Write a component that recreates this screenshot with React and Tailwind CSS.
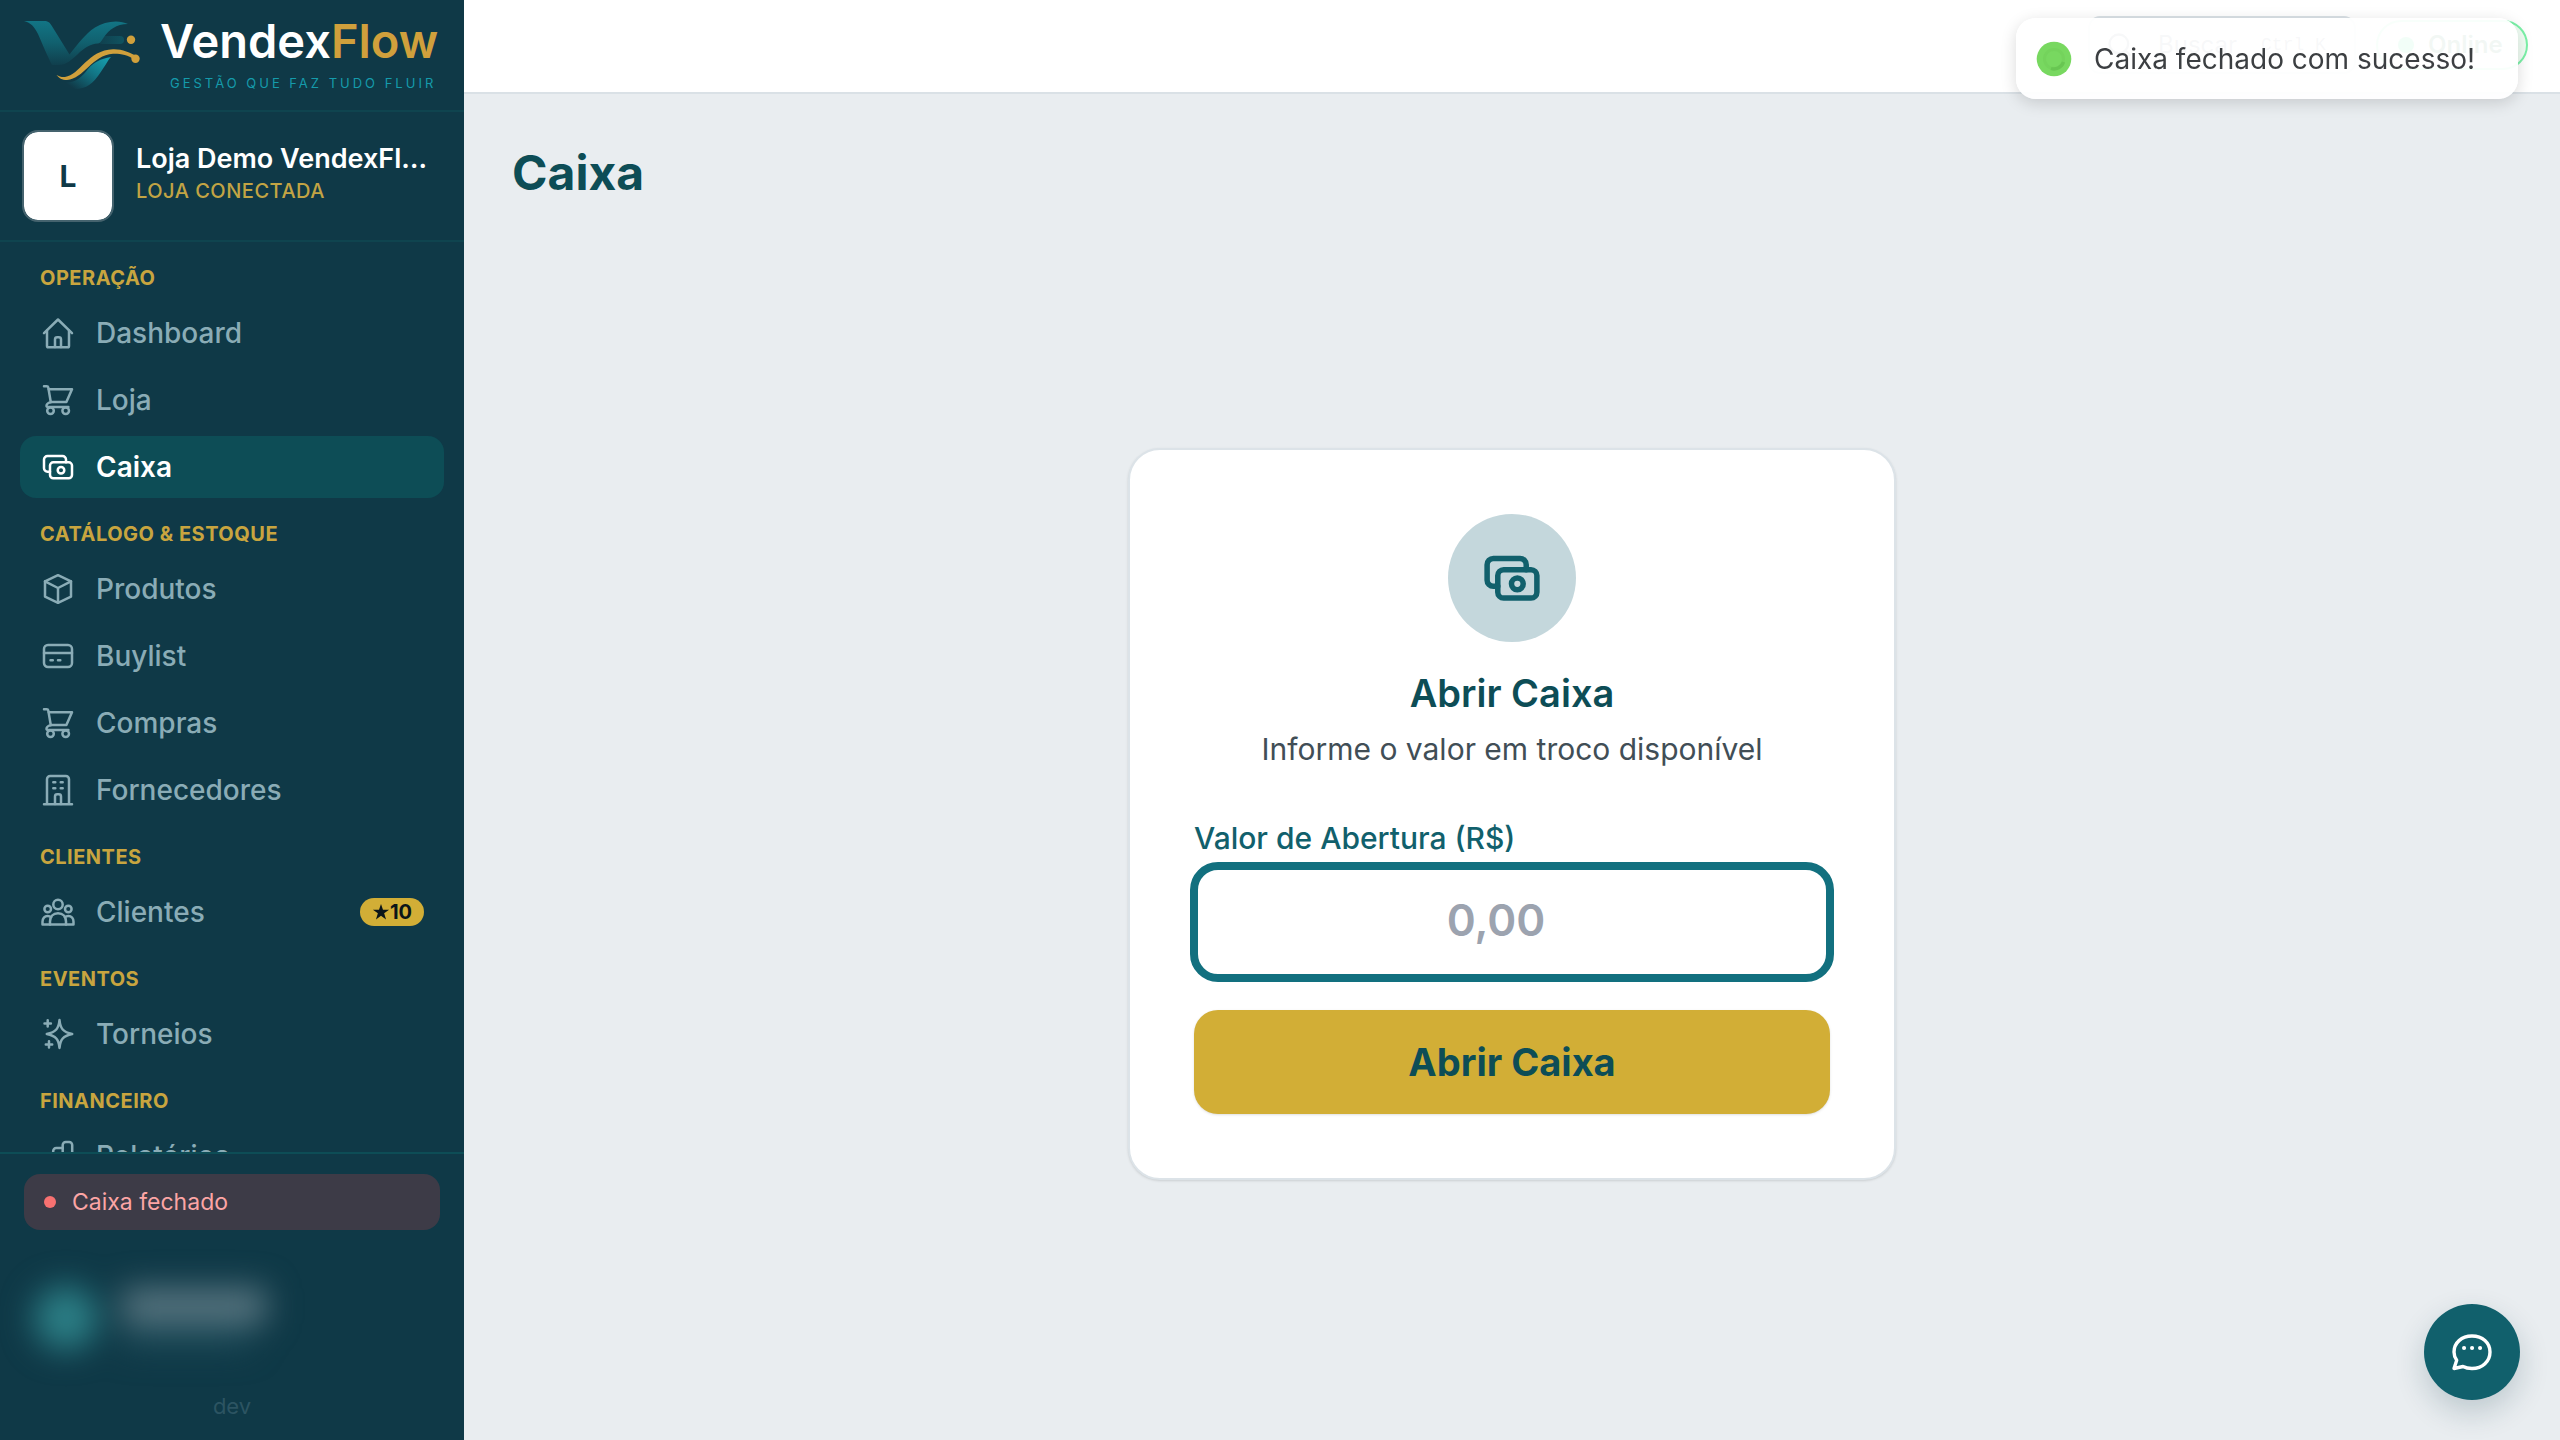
const icons = {
  home: (
    <>
      <path d="M4 18.2 18 4.5l14 13.7" />
      <path d="M7 15.5V31a1.3 1.3 0 0 0 1.3 1.3h19.4A1.3 1.3 0 0 0 29 31V15.5" />
      <path d="M15 32v-7.5a2.2 2.2 0 0 1 2.2-2.2h1.6a2.2 2.2 0 0 1 2.2 2.2V32" />
    </>
  ),
  cart: (
    <>
      <path d="M4 4.2h2.6c1 0 1.5.4 1.7 1.4l2.5 14.7" />
      <path d="M8.8 7.2H32l-5.6 12.9H10.8c-2 .5-4.3 2-4.3 3.7 0 .8.6 1.2 1.4 1.2h20.5" />
      <circle cx="10.5" cy="28.7" r="3.3" />
      <circle cx="25.7" cy="28.7" r="3.3" />
    </>
  ),
  cash: (
    <>
      <rect x="10" y="13.3" width="22" height="16" rx="3.3" />
      <circle cx="21" cy="21.3" r="3.3" />
      <path d="M10 22.7H7.5A3.5 3.5 0 0 1 4 19.2v-8.7A3.5 3.5 0 0 1 7.5 7h15a3.5 3.5 0 0 1 3.5 3.5v2.8" />
    </>
  ),
  box: (
    <>
      <path d="M18 4.2 31 10.4v15.2L18 31.8 5 25.6V10.4z" />
      <path d="M5 10.4 18 17l13-6.6M18 17v14.8" />
    </>
  ),
  card: (
    <>
      <rect x="4" y="7" width="28" height="22" rx="4" />
      <path d="M4 15h28M10.5 22.3h2.3M18 22.3h2.3" />
    </>
  ),
  building: (
    <>
      <path d="M4 32.3h28M7 32V7.2A3.2 3.2 0 0 1 10.2 4h15.6A3.2 3.2 0 0 1 29 7.2V32" />
      <path d="M15 32v-7.5a2.2 2.2 0 0 1 2.2-2.2h1.6a2.2 2.2 0 0 1 2.2 2.2V32" />
      <path d="M13.3 10.3h2M20.7 10.3h2M13.3 16.3h2M20.7 16.3h2" />
    </>
  ),
  people: (
    <>
      <circle cx="18" cy="10.5" r="4.7" />
      <circle cx="7.7" cy="15" r="3.3" />
      <circle cx="28.3" cy="15" r="3.3" />
      <path d="M10 30.5v-3c0-4.7 3-8.3 8-8.3s8 3.6 8 8.3v3" />
      <path d="M11.2 23.2c-1-.9-2-1.2-3.5-1.2-3.2 0-5.2 2.4-5.2 5.8v2.7h31v-2.7c0-3.4-2-5.8-5.2-5.8-1.5 0-2.5.3-3.5 1.2" />
    </>
  ),
  sparkles: (
    <>
      <path d="M19.5 4c.8 8.5 3.5 12.2 12.7 14-9.2 1.8-11.9 5.5-12.7 14-.8-8.5-3.5-12.2-12.7-14 9.2-1.8 11.9-5.5 12.7-14z" />
      <path d="M7.7 4.2v6.4M4.5 7.4h6.4M9 25.2v6.4M5.8 28.4h6.4" />
    </>
  ),
  chart: (
    <>
      <rect x="22.7" y="4" width="9.5" height="28" rx="3" />
      <path d="M22.7 32h-9.5V13a3 3 0 0 1 3-3h6.5M13.2 17H6.7a3 3 0 0 0-3 3v9a3 3 0 0 0 3 3h6.5" />
    </>
  ),
};

const groups = [
  {
    title: "Operação",
    items: [
      { label: "Dashboard", icon: "home" },
      { label: "Loja", icon: "cart" },
      { label: "Caixa", icon: "cash", active: true },
    ],
  },
  {
    title: "Catálogo & Estoque",
    items: [
      { label: "Produtos", icon: "box" },
      { label: "Buylist", icon: "card" },
      { label: "Compras", icon: "cart" },
      { label: "Fornecedores", icon: "building" },
    ],
  },
  {
    title: "Clientes",
    items: [{ label: "Clientes", icon: "people", badge: "10" }],
  },
  { title: "Eventos", items: [{ label: "Torneios", icon: "sparkles" }] },
  { title: "Financeiro", items: [{ label: "Relatórios", icon: "chart" }] },
];

function Icon({ name, className, strokeWidth = 2.5 }) {
  return (
    <svg
      viewBox="0 0 36 36"
      fill="none"
      stroke="currentColor"
      strokeWidth={strokeWidth}
      strokeLinecap="round"
      strokeLinejoin="round"
      aria-hidden="true"
      className={className}
    >
      {icons[name]}
    </svg>
  );
}

function Logo() {
  return (
    <svg viewBox="24 20 116 70" className="w-[116px] h-[70px] shrink-0" aria-hidden="true">
      <defs>
        <linearGradient id="wing" x1="0" y1="0" x2="0" y2="1">
          <stop offset="0" stopColor="#127585" />
          <stop offset="0.5" stopColor="#11606e" />
          <stop offset="1" stopColor="#103f4d" />
        </linearGradient>
        <linearGradient id="wave" x1="1" y1="0" x2="0.1" y2="0.8">
          <stop offset="0" stopColor="#17a3b3" />
          <stop offset="0.5" stopColor="#127585" />
          <stop offset="1" stopColor="#103947" />
        </linearGradient>
        <linearGradient id="trail" x1="0" y1="0" x2="1" y2="0">
          <stop offset="0" stopColor="#103f4d" />
          <stop offset="1" stopColor="#0f5360" />
        </linearGradient>
      </defs>
      <rect x="98" y="36" width="26" height="8" rx="4" fill="url(#trail)" />
      <path
        d="M24 21H44C48 21 50 22.5 52.5 27L69.5 54.5C78 44 85 34 95 27.5C105 21 119 19.5 128 24C116 24 109 30 104 37C101 41 101 43 98 43.5C90 44 84 48 78 54C71 60 67 65 58 65H52C47 55 42 43 38 34C34 26 31 23 24 21Z"
        fill="url(#wing)"
      />
      <path
        d="M111 57C108 60 104 68 98 76C90 87 82 89 75 89C69 89 63 86 60 82C74 85 82 77 88 69C94 62 100 59 111 57Z"
        fill="url(#wave)"
      />
      <path
        d="M56.5 75C59 76.5 62 77.3 65 77C80 75 88 50 113 49.3C122 49 130 52.5 137 56.5L134 59.5C128 55 120 53.5 113 53.8C92 55 84 79 67 80C62 80 59 78 56.5 75Z"
        fill="#d0a03c"
      />
      <circle cx="131" cy="39.7" r="4.2" fill="#d0a03c" />
      <circle cx="135.5" cy="58.8" r="4.2" fill="#d0a03c" />
    </svg>
  );
}

function NavItem({ item }) {
  return (
    <a
      href="#"
      aria-current={item.active ? "page" : undefined}
      className={
        item.active
          ? "flex items-center gap-5 h-[62px] px-5 rounded-2xl bg-[#0d4d56] text-white font-semibold"
          : "flex items-center gap-5 h-[62px] px-5 rounded-2xl text-[#8aacb6] font-medium hover:text-white"
      }
    >
      <Icon name={item.icon} className="size-9 shrink-0" />
      <span className="flex-1">{item.label}</span>
      {item.badge && (
        <span className="flex items-center justify-center w-16 h-7 rounded-full bg-[#d2ae36] text-[#0b1519] text-xl leading-7 font-bold">
          <svg viewBox="0 0 20 20" className="size-[18px] shrink-0" fill="currentColor" aria-hidden="true">
            <path d="m10 1 2.2 6.5H19l-5.5 4 2.1 6.7-5.6-4-5.6 4 2.1-6.7L1 7.5h6.8z" />
          </svg>
          {item.badge}
        </span>
      )}
    </a>
  );
}

function Sidebar() {
  return (
    <aside className="sticky top-0 h-screen w-[464px] shrink-0 flex flex-col bg-[#0f3947]">
      {/* Brand */}
      <div className="flex items-center gap-5 h-28 pl-6 border-b-2 border-[#0f444f]">
        <Logo />
        <div className="flex flex-col">
          <div className="text-[47px] leading-[44px] font-semibold text-white">
            Vendex<span className="text-[#d0a03c]">Flow</span>
          </div>
          <div className="pl-2.5 pt-3 text-[13px] leading-4 uppercase tracking-[3px] text-[#159bab]">
            Gestão que faz tudo fluir
          </div>
        </div>
      </div>

      {/* Store */}
      <div className="flex items-center gap-[22px] pl-[22px] pr-8 h-[130px] border-b-2 border-[#0f444f]">
        <div className="flex items-center justify-center size-[92px] shrink-0 rounded-2xl border-2 border-[#45636e] bg-white bg-clip-padding text-[30px] font-bold text-[#0f3947]">
          L
        </div>
        <div className="min-w-0 flex-1 pb-1.5">
          <div className="text-[27px] leading-9 font-semibold text-white truncate">
            Loja Demo VendexFlow
          </div>
          <div className="text-xl leading-7 uppercase tracking-wide font-medium text-[#c2a444]">
            Loja conectada
          </div>
        </div>
      </div>

      {/* Navigation */}
      <nav className="flex-1 min-h-0 overflow-hidden px-5 text-[28px]">
        {groups.map((group) => (
          <div key={group.title} className="pt-[21px]">
            <h2 className="mb-[9px] px-5 text-xl leading-[30px] font-bold uppercase tracking-wide text-[#c8a53f]">
              {group.title}
            </h2>
            <div className="flex flex-col gap-[5px]">
              {group.items.map((item) => (
                <NavItem key={item.label} item={item} />
              ))}
            </div>
          </div>
        ))}
      </nav>

      {/* Footer */}
      <div className="h-72 px-6 pt-5 border-t-2 border-[#0d4d56]">
        <div className="flex items-center gap-4 h-14 px-5 rounded-2xl bg-[#3d3b47] text-[23px] text-[#fca5a5]">
          <span className="size-3 rounded-full bg-[#f87171]" />
          Caixa fechado
        </div>
        <div className="flex items-center gap-6 h-[156px] pt-5 pl-2.5 blur-[16px]" aria-hidden="true">
          <div className="size-16 rounded-full bg-[#2c7f86]" />
          <div>
            <div className="w-36 h-9 rounded-sm bg-[#587580]" />
            <div className="mt-1 w-32 h-5 rounded-sm bg-[#1c4a58]" />
          </div>
        </div>
        <p className="pt-1 text-center text-[22px] leading-8 text-[#2c5462]">dev</p>
      </div>
    </aside>
  );
}

function Toast() {
  return (
    <div
      role="status"
      className="fixed top-[18px] right-[42px] flex items-center gap-[22px] h-[81px] w-[502px] pl-5 rounded-[20px] bg-white/95 shadow-[0_4px_16px_rgba(0,0,0,0.15)] text-[28px] text-[#3c3f42]"
    >
      <svg viewBox="0 0 36 36" className="size-9" fill="none" aria-hidden="true">
        <circle cx="18" cy="18" r="17.3" fill="#78d860" />
        <circle cx="18" cy="18" r="9.5" stroke="#74d35c" strokeWidth="3" />
        <path d="M27.5 21A10 10 0 0 1 15 27.5" stroke="#68c652" strokeWidth="3.4" />
      </svg>
      Caixa fechado com sucesso!
    </div>
  );
}

export default function App() {
  return (
    <div className="flex min-h-screen bg-[#e9edf0] font-['Inter',sans-serif]">
      <Sidebar />

      <div className="flex-1 min-w-0 flex flex-col">
        <header className="flex justify-end items-start gap-5 h-[94px] pt-4 pr-8 bg-white border-b-2 border-[#dae1e6]">
          <button className="flex items-center gap-6 h-[58px] w-[268px] px-4 rounded-xl border-2 border-[#dae1e6] text-2xl text-gray-500">
            <svg viewBox="0 0 24 24" className="size-7 shrink-0" fill="none" stroke="currentColor" strokeWidth="2" aria-hidden="true">
              <circle cx="11" cy="11" r="8" />
              <path d="m21 21-4-4" />
            </svg>
            Buscar
            <kbd className="font-['Liberation_Mono',monospace] text-lg whitespace-nowrap">Ctrl K</kbd>
          </button>
          <span className="flex items-center gap-3.5 h-[50px] w-[152px] mt-1 px-5 rounded-full border-2 border-green-300 bg-green-50 text-2xl font-semibold text-green-800">
            <span className="size-4 shrink-0 rounded-full bg-green-400" />
            Online
          </span>
        </header>

        <main className="flex-1 flex flex-col p-12">
          <h1 className="mb-8 text-[48px] leading-[62px] font-bold text-[#0d4d56]">Caixa</h1>

          <div className="flex-1 flex items-center justify-center">
            <form
              onSubmit={(e) => e.preventDefault()}
              className="w-full max-w-3xl flex flex-col p-16 rounded-[32px] border-2 border-[#dce3e8] bg-white shadow-sm"
            >
              <div className="flex items-center justify-center size-32 self-center rounded-full bg-[#c4d7dc] text-[#11606c]">
                <Icon name="cash" className="size-16" strokeWidth={3.1} />
              </div>
              <h2 className="mt-6 text-[38px] leading-[54px] font-semibold text-center text-[#0d4d56]">
                Abrir Caixa
              </h2>
              <p className="mt-2 text-[30px] leading-[42px] text-center text-[#414e56]">
                Informe o valor em troco disponível
              </p>
              <label
                htmlFor="opening"
                className="mt-[50px] mb-2.5 text-[30px] leading-9 font-medium text-[#11606c]"
              >
                Valor de Abertura (R$)
              </label>
              <input
                id="opening"
                type="text"
                inputMode="decimal"
                placeholder="0,00"
                className="-m-1 h-[120px] pl-8 pr-16 pb-1 rounded-[28px] border-8 border-[#12707f] outline-none text-center text-[44px] font-semibold text-[#0d4d56] placeholder:text-[#9ca3af]"
              />
              <button
                type="submit"
                className="mt-8 h-[104px] rounded-3xl bg-[#d2ae36] shadow-sm text-[38px] font-bold text-[#0d4d56]"
              >
                Abrir Caixa
              </button>
            </form>
          </div>
        </main>
      </div>

      <Toast />

      <button
        aria-label="Abrir chat"
        className="fixed right-10 bottom-10 flex items-center justify-center size-24 rounded-full bg-[#11606c] text-white shadow-[0_12px_30px_rgba(16,57,71,0.2)]"
      >
        <svg
          viewBox="0 0 48 48"
          className="size-12"
          fill="none"
          stroke="currentColor"
          strokeWidth="3.4"
          strokeLinecap="round"
          strokeLinejoin="round"
          aria-hidden="true"
        >
          <path d="M24 8C13.5 8 6 15 6 24c0 3 .9 5.8 2.7 8.2L6 40.5l9-2c2.8 1.5 5.8 2 9 2 10.5 0 18-7.2 18-16.5S34.5 8 24 8z" />
          <path d="M16 20h.1M24 20h.1M32 20h.1" strokeWidth="4" />
        </svg>
      </button>
    </div>
  );
}
